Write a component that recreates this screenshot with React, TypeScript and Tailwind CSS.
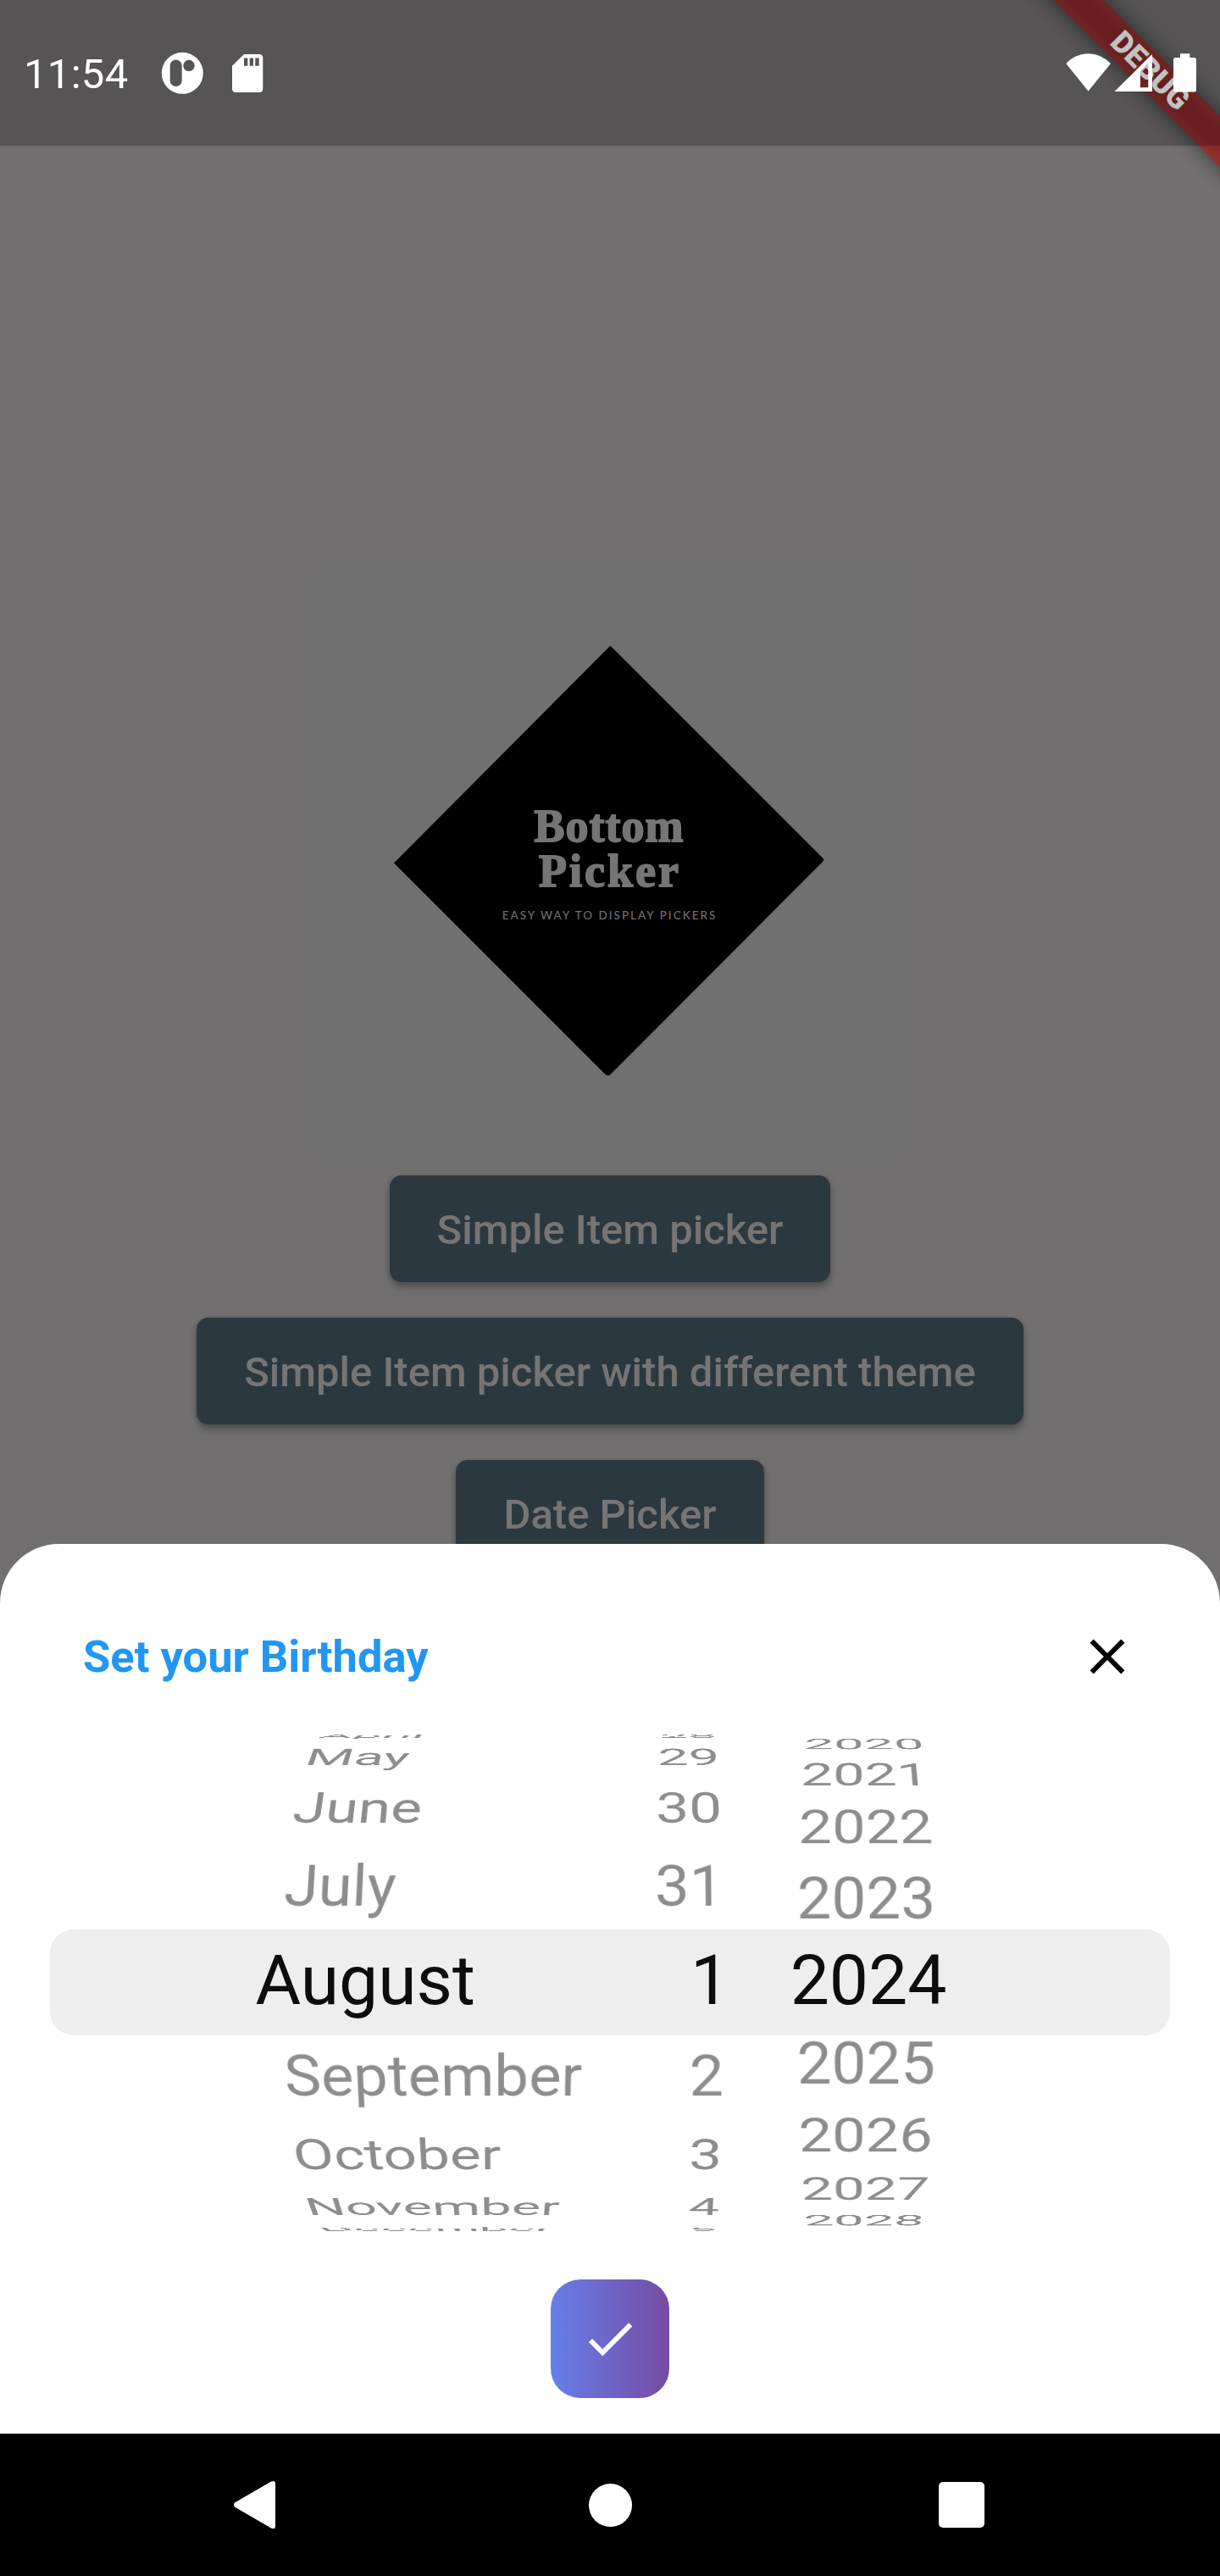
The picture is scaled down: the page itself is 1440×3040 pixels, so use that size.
import React from "react";

const ITEM_EXTENT = 112;
const WHEEL_HEIGHT = 700;
const DIAMETER_RATIO = 1.07;
const RADIUS = (WHEEL_HEIGHT * DIAMETER_RATIO) / 2;
const PERSPECTIVE = 3.5 / 0.003;
const MAGNIFICATION = 2.35 / 2.1;

type WheelProps = {
  items: string[];
  selected: number;
  squeeze: number;
  /** Distance from the item's left edge to the vanishing point. */
  axis: number;
  className: string;
  itemClassName: string;
};

function Wheel({ items, selected, squeeze, axis, className, itemClassName }: WheelProps) {
  const step = ((ITEM_EXTENT / WHEEL_HEIGHT) * 2 * Math.asin(1 / DIAMETER_RATIO)) / squeeze;
  return (
    <div className={`grid h-full items-center ${className}`}>
      {items.map((label, i) => {
        const angle = (selected - i) * step;
        const active = i === selected;
        return (
          <div
            key={label}
            className={`flex h-28 items-center whitespace-nowrap [grid-area:1/1] ${
              active ? "pb-[5px] text-[#0d0d0d]" : "pb-[3px] text-[#8d8d8d]"
            } ${itemClassName}`}
            style={{
              transformOrigin: `${axis}px 50%`,
              transform: active
                ? `scale(${MAGNIFICATION})`
                : `perspective(${PERSPECTIVE}px) translateZ(${-RADIUS}px) rotateX(${angle}rad) translateZ(${RADIUS}px)`,
            }}
          >
            {label}
          </div>
        );
      })}
    </div>
  );
}

const MONTHS = ["April", "May", "June", "July", "August", "September", "October", "November", "December"];
const DAYS = ["28", "29", "30", "31", "1", "2", "3", "4", "5"];
const YEARS = ["2019", "2020", "2021", "2022", "2023", "2024", "2025", "2026", "2027", "2028", "2029"];

function PickerButton({ children }: { children: React.ReactNode }) {
  return (
    <button className="h-[126px] rounded-[14px] bg-[#2c3840] px-14 pt-[3px] text-[49px] font-medium text-[#757575] shadow-[0_7px_9px_rgba(0,0,0,0.22),0_1px_6px_rgba(0,0,0,0.16)]">
      {children}
    </button>
  );
}

function Logo() {
  return (
    <div className="grid h-[700px] w-[700px] bg-[#707070]">
      <svg viewBox="0 0 700 700" className="h-full w-full [grid-area:1/1]">
        <path d="M350.4 97 L602 348.5 Q602.5 350.5 601 352 L350.5 603 Q347.5 605.5 344.5 603 L95 353.5 Z" fill="#000" />
      </svg>
      <div className="flex flex-col items-center pt-[284px] text-[#757575] [grid-area:1/1]">
        <div className="pr-[2px] font-['Liberation_Serif',serif] text-[54px] font-bold leading-[53px] tracking-[1px] [-webkit-text-stroke:1.8px_#757575]">
          Bottom
        </div>
        <div className="font-['Liberation_Serif',serif] text-[54px] font-bold leading-[53px] tracking-[3px] [-webkit-text-stroke:1.8px_#757575]">
          Picker
        </div>
        <div className="mt-[15px] whitespace-nowrap pr-[1px] font-['Lato',sans-serif] text-[13.5px] font-medium leading-5 tracking-[2px] text-[#6e6e6e]">
          EASY WAY TO DISPLAY PICKERS
        </div>
      </div>
    </div>
  );
}

function StatusBar() {
  return (
    <div className="relative h-[172px] bg-black/[0.24] text-white">
      <div className="flex h-full items-center pl-7 text-[49px] leading-none tracking-[0.3px]">
        <span className="pt-[3px]">11:54</span>
      </div>
      <svg className="absolute left-0 top-0" width="1440" height="172" viewBox="0 0 1440 172" fill="#fff">
        <path
          fillRule="evenodd"
          d="M215.3 61.8a24.5 24.5 0 1 0 0 49a24.5 24.5 0 1 0 0-49zM207.7 70.5a7 7 0 0 1 7 7v17.500a7 7 0 0 1-14 0V77.500a7 7 0 0 1 7-7zM223 70.700a6.700 6.700 0 1 1 0 13.400a6.700 6.700 0 1 1 0-13.400z"
        />
        <path
          fillRule="evenodd"
          d="M288 64H306Q310.300 64 310.300 68.500V104.500Q310.300 109 306 109H278.500Q274 109 274 104.500V77.800ZM288 68.500V77.700H292.300V68.500ZM294.700 68.500V77.700H299V68.500ZM301.300 68.500V77.700H305.700V68.500Z"
        />
        <path d="M1284.500 107.500L1258.300 75Q1269.500 63.300 1284.500 63.300T1311 75Z" />
        <path fillRule="evenodd" d="M1315.500 108L1360 64V108ZM1355.300 74.500L1346 83.700V103.300H1355.300Z" />
        <path d="M1393 63.200H1404.400V68H1409.500Q1412 68 1412 70.500V106Q1412 108.500 1409.500 108.500H1387.500Q1385 108.500 1385 106V70.500Q1385 68 1387.500 68H1393Z" />
      </svg>
    </div>
  );
}

function DebugBanner() {
  return (
    <div className="absolute right-0 top-0 h-[240px] w-[240px] overflow-hidden">
      <div className="absolute left-[157px] top-[84px] h-0 w-0 rotate-45">
        <div className="absolute left-[-190px] top-[-21px] h-[42px] w-[380px] bg-black/50 blur-[12px]" />
        <div className="absolute left-[-190px] top-[-21px] flex h-[42px] w-[380px] items-center justify-center bg-[#b71c1c]/[0.627] text-[35.7px] font-black leading-none text-white">
          DEBUG
        </div>
      </div>
    </div>
  );
}

export default function App() {
  return (
    <div className="relative grid h-[3040px] w-[1440px] overflow-hidden bg-[#716f70] font-['Roboto',sans-serif]">
      <main className="flex h-[1900px] flex-col items-center gap-[42px] overflow-hidden pt-[665px] [grid-area:1/1]">
        <div className="mb-[-20px]">
          <Logo />
        </div>
        <PickerButton>Simple Item picker</PickerButton>
        <PickerButton>Simple Item picker with different theme</PickerButton>
        <PickerButton>Date Picker</PickerButton>
      </main>

      <DebugBanner />
      <header className="z-10 self-start [grid-area:1/1]">
        <StatusBar />
      </header>

      <div className="z-10 flex flex-col self-end [grid-area:1/1]">
        <section className="flex h-[1050px] flex-col items-center rounded-t-[70px] bg-white">
          <div className="flex h-[224px] w-full items-center justify-between px-[98px] pt-[42px]">
            <h1 className="text-[52.5px] font-bold leading-none text-[#2196f3]">Set your Birthday</h1>
            <svg width="70" height="70" viewBox="0 0 24 24" fill="#000">
              <path d="M19 6.410L17.590 5 12 10.590 6.410 5 5 6.410 10.590 12 5 17.590 6.410 19 12 13.410 17.590 19 19 17.590 13.410 12z" />
            </svg>
          </div>

          <div className="grid h-[587px] w-full items-center overflow-hidden">
            <div className="mx-[59px] h-[125.500px] rounded-[28px] bg-[#eeeeee] [grid-area:1/1]" />
            <div className="flex h-[587px] pl-[331.5px] text-[73.5px] leading-none [grid-area:1/1]">
              <Wheel items={MONTHS} selected={4} squeeze={1.25} axis={256} className="w-[323.5px]" itemClassName="justify-start" />
              <Wheel items={DAYS} selected={4} squeeze={1.25} axis={148.5} className="w-[200px]" itemClassName="justify-end" />
              <Wheel items={YEARS} selected={5} squeeze={1.45} axis={61.9} className="ml-[85.4px] w-[170px]" itemClassName="justify-start" />
            </div>
          </div>

          <button className="mt-[57px] flex h-[140px] w-[140px] items-center justify-center rounded-[35px] bg-linear-to-r/srgb from-[#667eea] to-[#764ba2]">
            <svg width="70" height="70" viewBox="0 0 24 24" fill="#fff">
              <path d="M9 16.170L4.830 12l-1.420 1.410L9 19 21 7l-1.410-1.410z" />
            </svg>
          </button>
        </section>

        <nav className="grid h-[168px] grid-cols-[1fr_51px_1fr] items-center bg-black px-[276px]">
          <svg width="50" height="58" viewBox="0 0 50 58" fill="#fff">
            <path d="M1 26.500L44 1.500Q49 -0.500 49 4V54Q49 58.500 44 56.500L1 31.500Q-1 29 1 26.500Z" />
          </svg>
          <div className="h-[51px] w-[51px] rounded-full bg-white" />
          <div className="mr-[2.5px] h-[54px] w-[53.500px] justify-self-end rounded-[5px] bg-white" />
        </nav>
      </div>
    </div>
  );
}
